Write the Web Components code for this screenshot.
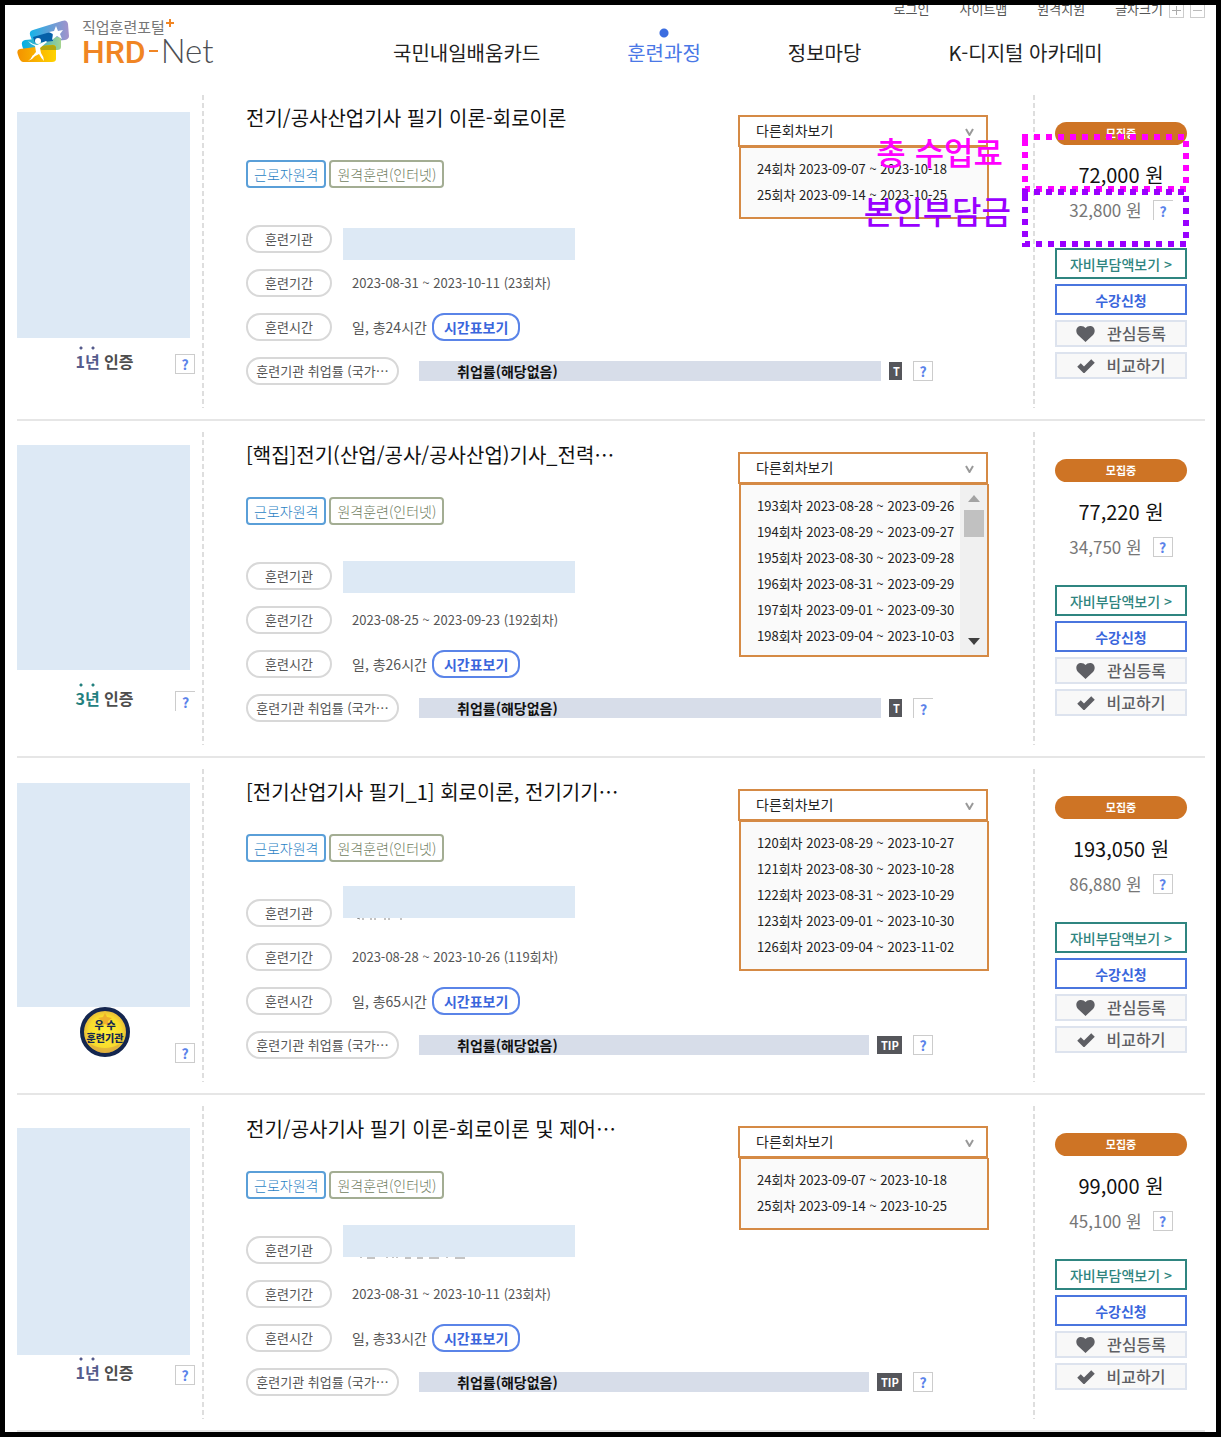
<!DOCTYPE html>
<html lang="ko">
<head>
<meta charset="utf-8">
<meta name="viewport" content="width=device-width, initial-scale=1">
<title>HRD-Net 훈련과정</title>
<style>
  * { box-sizing: border-box; }

  body {
    margin: 0;
    min-height: 100vh;
    padding: 0 11px 0 12px;
    border: 5px solid #000;
    background: #fff;
    color: #222;
    font: 14px/20px "Noto Sans CJK KR", "Noto Sans", sans-serif;
  }
</style>
</head>
<body>
<portal-header>
  <a slot="util" href="#login">로그인</a>
  <a slot="util" href="#sitemap">사이트맵</a>
  <a slot="util" href="#remote">원격지원</a>
  <a slot="nav" href="#card">국민내일배움카드</a>
  <a slot="nav" href="#course" class="current">훈련과정</a>
  <a slot="nav" href="#info">정보마당</a>
  <a slot="nav" href="#kdt">K-디지털 아카데미</a>
</portal-header>

<main>
  <course-card cert="1" period="2023-08-31 ~ 2023-10-11 (23회차)" hours="일, 총24시간" price="72,000" self="32,800"
    tip="T" help-self="open" style="--cover-top: 17px; --cover-height: 226px; --mask-top: 3px">
    <span slot="title">전기/공사산업기사 필기 이론-회로이론</span>
    <li slot="session">24회차 2023-09-07 ~ 2023-10-18</li>
    <li slot="session">25회차 2023-09-14 ~ 2023-10-25</li>
    <fee-callout slot="note"></fee-callout>
  </course-card>

  <course-card cert="3" period="2023-08-25 ~ 2023-09-23 (192회차)" hours="일, 총26시간" price="77,220" self="34,750"
    tip="T" help-cert="open" help-rate="open" scroll style="--cover-top: 13px; --cover-height: 225px; --mask-top: -1px">
    <span slot="title">[핵집]전기(산업/공사/공사산업)기사_전력…</span>
    <li slot="session">193회차 2023-08-28 ~ 2023-09-26</li>
    <li slot="session">194회차 2023-08-29 ~ 2023-09-27</li>
    <li slot="session">195회차 2023-08-30 ~ 2023-09-28</li>
    <li slot="session">196회차 2023-08-31 ~ 2023-09-29</li>
    <li slot="session">197회차 2023-09-01 ~ 2023-09-30</li>
    <li slot="session">198회차 2023-09-04 ~ 2023-10-03</li>
  </course-card>

  <course-card cert="seal" period="2023-08-28 ~ 2023-10-26 (119회차)" hours="일, 총65시간" price="193,050" self="86,880"
    tip="TIP" residue="M14 0l3 1M20 0v2M28 0v2M32 0v2M42 0v2M46 0v2M58 0v2" style="--cover-top: 14px; --cover-height: 224px; --mask-top: -13px">
    <span slot="title">[전기산업기사 필기_1] 회로이론, 전기기기…</span>
    <li slot="session">120회차 2023-08-29 ~ 2023-10-27</li>
    <li slot="session">121회차 2023-08-30 ~ 2023-10-28</li>
    <li slot="session">122회차 2023-08-31 ~ 2023-10-29</li>
    <li slot="session">123회차 2023-09-01 ~ 2023-10-30</li>
    <li slot="session">126회차 2023-09-04 ~ 2023-11-02</li>
  </course-card>

  <course-card cert="1" period="2023-08-31 ~ 2023-10-11 (23회차)" hours="일, 총33시간" price="99,000" self="45,100"
    tip="TIP" residue="M18 0v1M24 1h8M44 0v1M50 0v1M54 0v1M62 1h6M74 1h6M86 1h10M104 0v1M112 1h10" style="--cover-top: 22px; --cover-height: 227px; --mask-top: -11px">
    <span slot="title">전기/공사기사 필기 이론-회로이론 및 제어…</span>
    <li slot="session">24회차 2023-09-07 ~ 2023-10-18</li>
    <li slot="session">25회차 2023-09-14 ~ 2023-10-25</li>
  </course-card>
</main>

<script>
  // Shared by every shadow root
  const base = `
    * { box-sizing: border-box; }
    button, select { margin: 0; padding: 0; font: inherit; color: inherit; cursor: pointer; }
    svg { display: block; flex: none; }
  `;

  class PortalLogo extends HTMLElement {
    constructor() {
      super();
      this.attachShadow({ mode: 'open' }).innerHTML = `
        <style>
          ${base}
          :host { display: block; }
          a { display: flex; gap: 13px; color: #4d4f53; text-decoration: none; }
          .sub { display: flex; gap: 1px; font-size: 15px; line-height: 16px; color: #777; }
          .name { display: flex; align-items: baseline; gap: 3px; font: 300 33px/30px Lato, sans-serif; }
          b { font: 500 32px/30px Roboto, sans-serif; color: #f08524; }
          i { align-self: center; width: 9px; height: 2px; background: #f08524; }
        </style>
        <a href="#home">
          <svg width="52" height="44" viewBox="0 0 52 44" aria-hidden="true">
            <defs>
              <linearGradient id="sky"><stop stop-color="#16b4e8"/><stop offset=".5" stop-color="#5f9fd8"/><stop offset="1" stop-color="#a493cb"/></linearGradient>
              <linearGradient id="leaf"><stop stop-color="#00aee6"/><stop offset=".6" stop-color="#58b9b8"/><stop offset="1" stop-color="#a5d48e"/></linearGradient>
              <linearGradient id="sun"><stop stop-color="#f39200"/><stop offset="1" stop-color="#ffd300"/></linearGradient>
            </defs>
            <path d="M16 11L45 2q5-2 6 3l1 12q0 3-4 4l-32 3-3-8q-1-4 3-5z" fill="url(#sky)"/>
            <path d="M8 21l32-3q4 0 4 3v7q0 3-4 3H8q-2 0-3-5-1-4 3-5z" fill="url(#leaf)"/>
            <path d="M16 18l14-4q5-2 6 3v5l-18 2z" fill="#0560a8"/>
            <path d="M3 30l31-4q5-1 5 4v10q0 3-4 3H6q-3 0-5-7-2-5 2-6z" fill="url(#sun)"/>
            <path d="M22 27l14-1q2 0 3 2v3H24z" fill="#b4a70d"/>
            <path d="M39 7l2 5 5-1-3 4 2 5-5-3-5 4 1-6-4-2 5-1z" fill="#fff"/>
            <circle cx="21" cy="22" r="3" fill="#fff"/>
            <path d="M11 22q4 3 9 4l9-4 1 1-7 6 1 5q3 4 3 8-3-3-5-7-3 2-7 3 2-3 4-5l-1-6q-4-1-7-5z" fill="#fff"/>
            <path d="M16 36q-2 4-5 6 4-1 7-5z" fill="#fff"/>
          </svg>
          <span>
            <span class="sub">직업훈련포털
              <svg width="8" height="8" viewBox="0 0 8 8" aria-hidden="true"><path d="M4 0v8M0 4h8" stroke="#f08524" stroke-width="2"/></svg>
            </span>
            <span class="name"><b>HRD</b><i></i><span>Net</span></span>
          </span>
        </a>
      `;
    }
  }

  class PortalHeader extends HTMLElement {
    constructor() {
      super();
      this.attachShadow({ mode: 'open' }).innerHTML = `
        <style>
          ${base}
          :host {
            display: grid;
            grid-template: 13px 66px / 376px 1fr;
          }
          portal-logo { grid-row: 1 / 3; padding-top: 14px; }
          .util {
            display: flex;
            justify-content: flex-end;
            align-items: flex-end;
            gap: 30px;
            overflow: hidden;
            font-size: 13px;
            line-height: 18px;
            color: #555;
          }
          .size { display: flex; align-items: flex-end; gap: 6px; }
          .size button {
            display: grid;
            place-items: center;
            width: 15px;
            height: 15px;
            border: 1px solid #ccc;
            background: #fff;
          }
          nav { display: flex; gap: 87px; padding-top: 20px; font-size: 20px; line-height: 30px; white-space: nowrap; }
          ::slotted(a) { color: inherit; text-decoration: none; }
          ::slotted(a.current) {
            color: #4a78e6;
            background: radial-gradient(circle at center, #3b6de0 4px, transparent 5px) center top / 10px 10px no-repeat;
            margin-top: -10px;
            padding-top: 10px;
          }
        </style>
        <portal-logo></portal-logo>
        <div class="util">
          <slot name="util"></slot>
          <span class="size">글자크기
            <button aria-label="확대"><svg width="9" height="9" viewBox="0 0 9 9"><path d="M4.500 0v9M0 4.500h9" stroke="#aaa"/></svg></button>
            <button aria-label="축소"><svg width="9" height="9" viewBox="0 0 9 9"><path d="M0 4.500h9" stroke="#bbb"/></svg></button>
          </span>
        </div>
        <nav><slot name="nav"></slot></nav>
      `;
    }
  }

  class HelpButton extends HTMLElement {
    constructor() {
      super();
      this.attachShadow({ mode: 'open' }).innerHTML = `
        <style>
          ${base}
          :host { display: block; flex: none; width: 20px; height: 20px; }
          button {
            display: block;
            width: 100%;
            height: 100%;
            border: 1px solid #ccc;
            background: #fff;
            color: #5b83ea;
            font-size: 14px;
            font-weight: 700;
            line-height: 18px;
          }
          :host([open]) button { border-width: 1px 0 0 1px; }
        </style>
        <button>?</button>
      `;
    }
  }

  class SessionPicker extends HTMLElement {
    constructor() {
      super();
      this.attachShadow({ mode: 'open' }).innerHTML = `
        <style>
          ${base}
          :host { display: block; }
          .head { position: relative; display: block; margin-right: 1px; }
          select {
            display: block;
            width: 100%;
            height: 32px;
            padding: 0 16px 2px;
            appearance: none;
            border: 2px solid #d58a45;
            border-radius: 0;
            background: #fff;
          }
          .head svg { position: absolute; right: 14px; top: 13px; pointer-events: none; }
          .panel {
            display: flex;
            justify-content: space-between;
            margin-left: 1px;
            border: 2px solid #d58a45;
            border-top-width: 1px;
            background: #fafafa;
          }
          ul { margin: 0; padding: 8px 0 9px 16px; list-style: none; font-size: 13px; line-height: 26px; white-space: nowrap; }
          .bar { display: none; }
          :host([scroll]) .panel { max-height: 173px; }
          :host([scroll]) .bar {
            display: flex;
            flex-direction: column;
            align-items: center;
            gap: 8px;
            width: 27px;
            padding: 10px 0;
            background: #f0f0f0;
          }
          .bar i { width: 20px; height: 27px; background: #c1c1c1; }
          .bar svg:last-child { margin-top: auto; }
        </style>
        <label class="head">
          <select aria-label="다른회차보기"><option>다른회차보기</option></select>
          <svg width="9" height="8" viewBox="0 0 9 8"><path d="M1 1l3.500 6L8 1" fill="none" stroke="#999" stroke-width="2"/></svg>
        </label>
        <div class="panel">
          <ul><slot></slot></ul>
          <div class="bar">
            <svg width="12" height="7" viewBox="0 0 12 7"><path d="M0 7l6-7 6 7z" fill="#a3a3a3"/></svg>
            <i></i>
            <svg width="12" height="7" viewBox="0 0 12 7"><path d="M0 0h12L6 7z" fill="#404040"/></svg>
          </div>
        </div>
      `;
    }
  }

  class CertMark extends HTMLElement {
    constructor() {
      super();
      const type = this.getAttribute('type');

      this.attachShadow({ mode: 'open' }).innerHTML = `
        <style>
          ${base}
          :host { display: block; font-size: 16px; font-weight: 700; line-height: 24px; color: #4d4d4d; }
          .years {
            padding-top: 3px;
            color: ${type === '3' ? '#23807e' : '#555b8c'};
            background: radial-gradient(circle at center, currentColor 1px, transparent 2px) 0 0 / 12px 4px repeat-x;
          }
        </style>
        ${type === 'seal' ? `
        <svg width="50" height="50" viewBox="0 0 50 50">
          <defs><radialGradient id="gold"><stop stop-color="#ffee3a"/><stop offset=".7" stop-color="#f8dc2c"/><stop offset="1" stop-color="#e3b13f"/></radialGradient></defs>
          <circle cx="25" cy="25" r="23" fill="url(#gold)" stroke="#14264f" stroke-width="4"/>
          <path d="M25 6l2 4 5 1-4 3 1 5-4-2-4 2 1-5-4-3 5-1z" fill="#eeb02c"/>
          <path d="M10 37q15 8 30 0-5 9-15 9t-15-9z" fill="#d9a441" opacity=".6"/>
          <text x="25" y="22" text-anchor="middle" font-size="10" font-weight="900" fill="#14264f">우 수</text>
          <text x="25" y="35" text-anchor="middle" font-size="10" font-weight="900" fill="#14264f">훈련기관</text>
        </svg>` : `<span class="years">${type}년</span> 인증`}
      `;
    }
  }

  // Dotted frames and captions over the two fee lines
  class FeeCallout extends HTMLElement {
    constructor() {
      super();
      this.attachShadow({ mode: 'open' }).innerHTML = `
        <style>
          ${base}
          :host { position: absolute; inset: 0; pointer-events: none; font-size: 32px; font-weight: 500; line-height: 40px; }
          span, svg { position: absolute; }
          .total { color: #f0f; }
          .own { color: #90f; }
          svg { right: 16px; fill: none; stroke: currentColor; stroke-width: 6; stroke-dasharray: 6; }
          svg.total { top: 50px; }
          svg.own { top: 105px; }
          span.total { top: 47px; right: 202px; }
          span.own { top: 106px; right: 194px; }
        </style>
        <span class="total">총 수업료</span>
        <span class="own">본인부담금</span>
        <svg class="total" width="167" height="58"><path d="M0 3h164v52H3V3"/></svg>
        <svg class="own" width="167" height="58"><path d="M0 3h164v52H3V3"/></svg>
      `;
    }
  }

  class CourseCard extends HTMLElement {
    constructor() {
      super();
      const attr = name => this.getAttribute(name) || '';

      this.attachShadow({ mode: 'open' }).innerHTML = `
        <style>
          ${base}
          :host {
            position: relative;
            display: grid;
            grid-template-columns: 185px 1fr 170px;
            padding: 11px 0;
            border-bottom: 2px solid #e6e6e6;
          }

          .cover-area { height: 238px; padding-top: var(--cover-top); }
          .cover { width: 173px; height: var(--cover-height); background: #dde9f5; }
          .cert { display: grid; align-items: center; width: 178px; height: 56px; }
          .cert > * { grid-area: 1 / 1; }
          cert-mark { justify-self: center; margin-right: 3px; }
          .cert help-button { justify-self: end; margin-top: 6px; }
          .cert.seal cert-mark { align-self: start; }
          .cert.seal help-button { align-self: end; }

          .detail {
            --dash: linear-gradient(#dedede 5px, transparent 5px);
            display: grid;
            grid-template-columns: 1fr 251px;
            row-gap: 16px;
            padding: 8px 46px 23px 44px;
            background: var(--dash) left top / 2px 8px repeat-y, var(--dash) right top / 2px 8px repeat-y;
          }
          h2 { margin: 0; font-size: 20px; font-weight: 400; line-height: 30px; color: #111; }
          .tags { display: flex; gap: 3px; margin: 27px 0 37px; font-weight: 300; line-height: 24px; }
          .tags span { padding: 0 6px; border: 2px solid #5a9fd8; border-radius: 4px; color: #2b7fc4; }
          .tags span + span { border-color: #a3ad93; color: #6f7d60; }
          dl { display: grid; gap: 16px; margin: 0; color: #555; }
          .row { position: relative; display: flex; align-items: center; height: 28px; }
          dt {
            flex: none;
            width: 86px;
            border: 2px solid #d8d8d8;
            border-radius: 14px;
            font-size: 13px;
            line-height: 24px;
            text-align: center;
          }
          dd { display: flex; align-items: center; gap: 5px; margin: 0 0 0 20px; }
          .period { font-size: 13px; }
          .mask { position: absolute; left: 97px; top: var(--mask-top); width: 232px; height: 32px; margin: 0; background: #dde9f5; }
          .mask svg { position: absolute; top: 100%; left: 0; }
          .time {
            height: 28px;
            padding: 0 10px;
            border: 2px solid #5a84e8;
            border-radius: 12px;
            background: #fff;
            color: #3a66dc;
            font-weight: 700;
            line-height: 22px;
          }
          session-picker { margin-top: 12px; }
          .rate { grid-column: 1 / 3; display: block; margin-right: 56px; }
          .rate dt { width: 153px; }
          .rate dd { flex: 1; gap: 8px; }
          .fill { flex: 1; padding-left: 38px; background: #d7dde9; color: #111; font-weight: 700; }
          .tip {
            width: 25px;
            height: 18px;
            padding-left: 4px;
            overflow: hidden;
            background: #55565b;
            color: #fff;
            font-size: 11px;
            font-weight: 700;
            line-height: 18px;
          }
          .tip.short { width: 13px; }
          .rate help-button { margin-left: 3px; }

          .side { padding: 27px 18px 0 20px; text-align: center; }
          .state { border-radius: 12px; background: #ce7425; color: #fff; font-size: 11px; font-weight: 700; line-height: 23px; }
          .price { margin-top: 15px; font-size: 20px; line-height: 30px; color: #111; }
          .self {
            display: flex;
            justify-content: center;
            align-items: center;
            gap: 11px;
            margin: 8px 0 26px;
            font-size: 17px;
            line-height: 24px;
            color: #777;
          }
          .actions { display: grid; gap: 5px; font-weight: 500; }
          .actions button { height: 31px; border: 2px solid #2f8580; background: #fff; color: #2f8580; }
          .actions .apply { border-color: #4a75de; color: #3a66dc; font-weight: 700; }
          .actions .tool {
            display: flex;
            justify-content: center;
            align-items: center;
            gap: 12px;
            height: 27px;
            border-color: #dde3ee;
            background: #f8f8f8;
            color: #5e5f64;
            font-size: 16px;
            line-height: 23px;
          }
        </style>
        <div class="thumb">
          <div class="cover-area"><div class="cover"></div></div>
          <div class="cert ${attr('cert')}">
            <cert-mark type="${attr('cert')}"></cert-mark>
            <help-button ${attr('help-cert')}></help-button>
          </div>
        </div>
        <div class="detail">
          <div class="info">
            <h2><slot name="title"></slot></h2>
            <div class="tags"><span>근로자원격</span><span>원격훈련(인터넷)</span></div>
            <dl>
              <div class="row">
                <dt>훈련기관</dt>
                <dd class="mask"><svg width="130" height="2" fill="none" stroke="#888"><path d="${attr('residue')}"/></svg></dd>
              </div>
              <div class="row"><dt>훈련기간</dt><dd class="period">${attr('period')}</dd></div>
              <div class="row"><dt>훈련시간</dt><dd>${attr('hours')}<button class="time">시간표보기</button></dd></div>
            </dl>
          </div>
          <session-picker ${this.hasAttribute('scroll') ? 'scroll' : ''}><slot name="session"></slot></session-picker>
          <dl class="rate">
            <div class="row">
              <dt>훈련기관 취업률 (국가…</dt>
              <dd>
                <span class="fill">취업률(해당없음)</span>
                <span class="tip ${attr('tip') === 'T' ? 'short' : ''}">${attr('tip')}</span>
                <help-button ${attr('help-rate')}></help-button>
              </dd>
            </div>
          </dl>
        </div>
        <div class="side">
          <div class="state">모집중</div>
          <div class="price">${attr('price')} 원</div>
          <div class="self">${attr('self')} 원<help-button ${attr('help-self')}></help-button></div>
          <div class="actions">
            <button>자비부담액보기 &gt;</button>
            <button class="apply">수강신청</button>
            <button class="tool">
              <svg width="19" height="16" viewBox="0 0 19 16" fill="currentColor"><path d="M9.500 16L2 9C-1 6 0 0 5 0q3 0 4.500 2Q11 0 14 0c5 0 6 6 3 9z"/></svg>관심등록
            </button>
            <button class="tool">
              <svg width="18" height="14" viewBox="0 0 18 14"><path d="M2 6l5 5 9-9" fill="none" stroke="currentColor" stroke-width="5"/></svg>비교하기
            </button>
          </div>
        </div>
        <slot name="note"></slot>
      `;
    }
  }

  window.customElements.define('portal-logo', PortalLogo);
  window.customElements.define('portal-header', PortalHeader);
  window.customElements.define('help-button', HelpButton);
  window.customElements.define('session-picker', SessionPicker);
  window.customElements.define('cert-mark', CertMark);
  window.customElements.define('fee-callout', FeeCallout);
  window.customElements.define('course-card', CourseCard);
</script>
</body>
</html>
